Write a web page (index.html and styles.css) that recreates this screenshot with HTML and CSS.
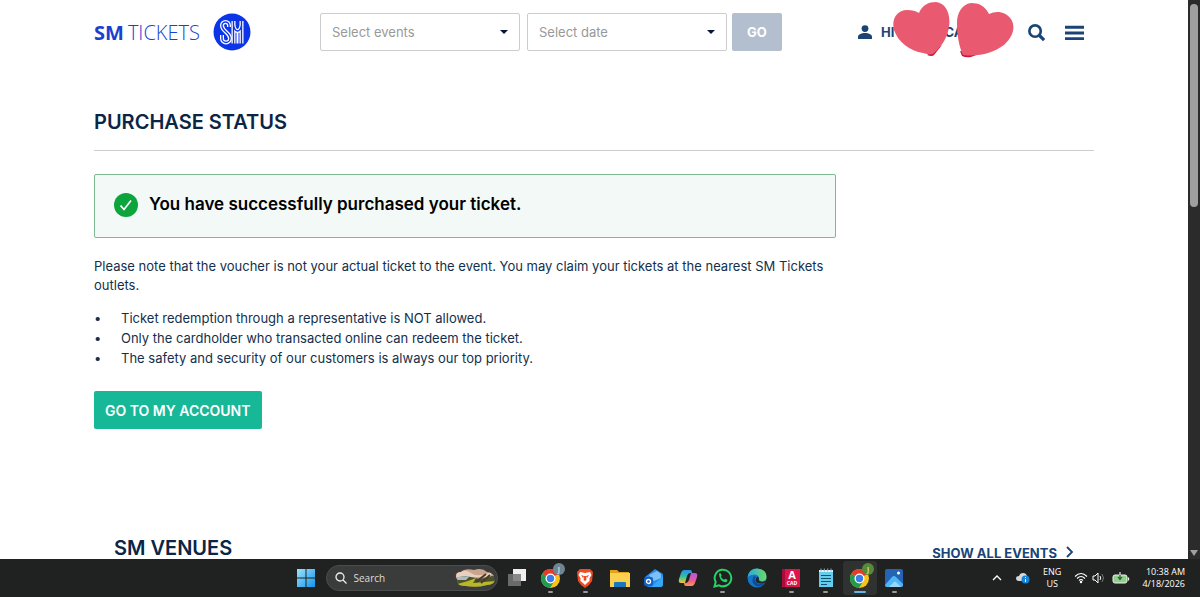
FILE: index.html
```html
<!DOCTYPE html>
<html lang="en">
<head>
  <meta charset="utf-8">
  <title>SM Tickets - Purchase Status</title>
  <link rel="stylesheet" href="styles.css">
</head>
<body>

<div class="browser">
  <div class="page">
    <header class="header container">
      <a class="logo" href="#">
        <span class="logo-sm">SM</span><span class="logo-tickets">TICKETS</span>
        <svg class="logo-mark" viewBox="0 0 38 38">
          <circle cx="19" cy="19" r="18.5" fill="#0c35e8"/>
          <g fill="none" stroke="#fff" stroke-width="4" stroke-linejoin="round">
            <path d="M16 14v-1.500a3.500 3.500 0 0 0-7 0c0 6 8 7 8 13a4 4 0 0 1-8 0V22"/>
            <path d="M20.500 30.500V8M28.500 8v22.500M20.500 12q1 6 4 6t4-6"/>
            <path d="M24.500 17v13.500" stroke-width="2"/>
          </g>
          <g fill="none" stroke="#0c35e8" stroke-width="1.400">
            <path d="M16 14v-1.500a3.500 3.500 0 0 0-7 0c0 6 8 7 8 13a4 4 0 0 1-8 0V22"/>
            <path d="M20.500 31V7M28.500 7v24M20.500 12q1 6 4 6t4-6"/>
          </g>
        </svg>
      </a>

      <form class="search-form">
        <div class="select-box">
          <select aria-label="Select events"><option>Select events</option></select>
        </div>
        <div class="select-box">
          <select aria-label="Select date"><option>Select date</option></select>
        </div>
        <button class="go-btn" type="button">GO</button>
      </form>

      <div class="header-right">
        <a class="user" href="#">
          <svg class="user-icon" viewBox="0 0 14 14"><circle cx="7" cy="3.600" r="3.400"/><path d="M0 14v-2c0-3 4-4 7-4s7 1 7 4v2z"/></svg>
          <span>HI</span><span class="user-name">CA</span>
          <svg class="hearts" viewBox="0 0 122 58">
            <path d="M50 44L42 54q-2 2-7 0z" fill="#c9163c"/>
            <path d="M68 50l2 5q4 2 9 1l8-3z" fill="#c9163c"/>
            <path d="M27 12C30 4 37 1 44 1c10 1 15 12 13 25C55 38 49 46 41 53c-3 1-6 0-10-1C18 50 6 41 2 29-1 17 6 9 15 9c5 0 9 1 12 3z" fill="#e95a70"/>
            <path d="M97 13C93 5 87 2 79 2c-9 1-14 10-14 20 0 12 2 24 6 32 16 2 30-2 41-10 9-8 12-18 7-26-5-7-14-9-22-5z" fill="#e95a70"/>
          </svg>
        </a>
        <button class="icon-btn" type="button" aria-label="Search">
          <svg viewBox="0 0 20 20" fill="none" stroke="#1a4475" stroke-width="2.800"><circle cx="8.500" cy="8.500" r="6"/><path d="M13 13l5 5" stroke-width="3.400"/></svg>
        </button>
        <button class="icon-btn" type="button" aria-label="Menu">
          <svg viewBox="0 0 20 20" fill="#1a4475"><path d="M0 3h20v3H0zM0 9h20v3H0zM0 15h20v3H0z"/></svg>
        </button>
      </div>
    </header>

    <main class="container">
      <h1 class="title">PURCHASE STATUS</h1>

      <div class="content">
        <div class="alert">
          <svg class="alert-icon" viewBox="0 0 24 24"><circle cx="12" cy="12" r="12" fill="#0ca43c"/><path d="M6.500 12.500l3.500 4 7-9" fill="none" stroke="#fff" stroke-width="1.700"/></svg>
          <strong>You have successfully purchased your ticket.</strong>
        </div>
        <p class="note">Please note that the voucher is not your actual ticket to the event. You may claim your tickets at the nearest SM Tickets outlets.</p>
        <ul class="rules">
          <li>Ticket redemption through a representative is NOT allowed.</li>
          <li>Only the cardholder who transacted online can redeem the ticket.</li>
          <li>The safety and security of our customers is always our top priority.</li>
        </ul>
        <button class="account-btn" type="button">GO TO MY ACCOUNT</button>
      </div>

      <section class="venues">
        <h2>SM VENUES</h2>
        <a class="show-all" href="#">SHOW ALL EVENTS
          <svg viewBox="0 0 8 12"><path d="M1 1l5 5-5 5" fill="none" stroke="#1a4475" stroke-width="1.800"/></svg>
        </a>
      </section>
    </main>
  </div>

  <div class="scrollbar">
    <div class="thumb"></div>
    <div class="arrow-down"></div>
  </div>
</div>

<!-- taskbar -->
<footer class="taskbar">
  <div class="task-center">
    <a class="app" href="#" aria-label="Start">
      <svg viewBox="0 0 20 20">
        <defs><linearGradient id="win" x2="1" y2="1"><stop stop-color="#9be4fb"/><stop offset="1" stop-color="#1593ea"/></linearGradient></defs>
        <path d="M1 1h8.500v8.500H1zM10.500 1H19v8.500h-8.500zM1 10.500h8.500V19H1zM10.500 10.500H19V19h-8.500z" fill="url(#win)"/>
      </svg>
    </a>
    <label class="task-search">
      <svg class="glass" viewBox="0 0 12 12" fill="none" stroke="#eee" stroke-width="1.300"><circle cx="5" cy="5" r="4"/><path d="M8 8l3.500 3.500"/></svg>
      <input type="text" placeholder="Search">
      <svg class="scene" viewBox="0 0 42 20">
        <defs><clipPath id="sc"><path d="M2 9Q1 4 7 4Q11 0 20 2Q28-1 33 4Q41 5 40 11Q42 16 33 17Q24 20 12 18Q2 18 4 13z"/></clipPath></defs>
        <g clip-path="url(#sc)">
          <path d="M0 0h42v20H0z" fill="#c9a58f"/>
          <path d="M3 5q8-5 14 0t20-1v5H2z" fill="#e8cfbe"/>
          <path d="M0 10l12-2 14 3 16-4v13H0z" fill="#4b5128"/>
          <path d="M2 9l14-1-4 4H2z" fill="#aebcc0"/>
          <path d="M0 17l14-4 8-3-3 5 22-2v7H0z" fill="#b8b728"/>
          <path d="M22 14L32 6M27 15l9-8" stroke="#4b3b2c" stroke-width="2"/>
        </g>
      </svg>
    </label>
    <nav class="apps">
      <a class="app" href="#" aria-label="Task view">
        <svg viewBox="0 0 20 20"><path d="M6 1h13v12H6z" fill="#f0f0f0"/><path d="M1 6h13v12H1z" fill="#777" opacity=".85"/></svg>
      </a>
      <a class="app open" href="#" aria-label="Chrome">
        <svg viewBox="0 0 20 20">
          <g id="chrome">
            <circle cx="9.500" cy="10.500" r="9.500" fill="#fbc116"/>
            <path d="M9.500 10.500L1.300 5.700A9.500 9.500 0 0 1 17.700 5.700z" fill="#e33b2e"/>
            <path d="M1.300 5.700A9.500 9.500 0 0 0 9 20l4.500-7.300-4-2.200z" fill="#229c4c"/>
            <circle cx="9.500" cy="10.500" r="5" fill="#fff"/>
            <circle cx="9.500" cy="10.500" r="3.700" fill="#3b7de9"/>
          </g>
        </svg>
        <span class="badge">J</span>
      </a>
      <a class="app open" href="#" aria-label="Brave">
        <svg viewBox="0 0 20 20"><path d="M5 1h10l3 3-1 9-3 4-4 3-4-3-3-4-1-9z" fill="#f04a23"/><path d="M5 4l5 1 5-1 1.500 3-2 3 0 3-2.500 2-2 2-2-2-2.500-2V10l-2-3z" fill="#fff"/><path d="M6 7l3 1-1 2zM14 7l-3 1 1 2zM9 8h2l.5 4-1.500 1-1.500-1z" fill="#f04a23"/></svg>
      </a>
      <a class="app" href="#" aria-label="File Explorer">
        <svg viewBox="0 0 20 20"><path d="M0 2h7l2 2h10v5H0z" fill="#e2a21b"/><path d="M0 5h20v14H0z" fill="#fcd04f"/><path d="M4 19v-4q0-1 1-1h10q1 0 1 1v4z" fill="#1978bd"/></svg>
      </a>
      <a class="app" href="#" aria-label="Outlook">
        <svg viewBox="0 0 20 20"><path d="M1 9l10-8 8 5v10q0 3-3 3H5q-3 0-4-3z" fill="#2789ea"/><path d="M5 7l8-4 4 3v4l-7 3z" fill="#7cc0fa"/><path d="M7 19l12-11v8q0 3-3 3z" fill="#36a7f7"/><rect y="9" width="9" height="9" rx="2" fill="#1262c6"/><circle cx="4.500" cy="13.500" r="2" fill="none" stroke="#fff" stroke-width="1.300"/></svg>
      </a>
      <a class="app" href="#" aria-label="Copilot">
        <svg viewBox="0 0 20 20">
          <defs>
            <linearGradient id="cpa" x2="0" y2="1"><stop stop-color="#2a8eea"/><stop offset=".5" stop-color="#35bfa0"/><stop offset="1" stop-color="#f4c832"/></linearGradient>
            <linearGradient id="cpb" x2="0" y2="1"><stop stop-color="#a85be8"/><stop offset=".6" stop-color="#ee5a90"/><stop offset="1" stop-color="#fb9a4a"/></linearGradient>
          </defs>
          <path d="M6 2h6q2 0 2 3l-2 0q-2 0-3 3l-2 7H3q-3 0-2-4l2-6q1-3 3-3z" fill="url(#cpa)"/>
          <path d="M14 18H8q-2 0-2-3h2q2 0 3-3l2-7h4q3 0 2 4l-2 6q-1 3-3 3z" fill="url(#cpb)"/>
        </svg>
      </a>
      <a class="app open" href="#" aria-label="WhatsApp">
        <svg viewBox="0 0 20 20"><path d="M1.500 18.500l1.200-4.500a8.300 8.300 0 1 1 3.300 3.300z" fill="none" stroke="#25d366" stroke-width="2"/><path d="M6 6q1-2 2 0l.7 1.600-.8 1.200q1 2 3.200 3l1.200-1 2 1q.6 2-2 2.500Q6.500 13.500 6 6z" fill="#25d366"/></svg>
      </a>
      <a class="app" href="#" aria-label="Edge">
        <svg viewBox="0 0 20 20">
          <defs><linearGradient id="ed"><stop stop-color="#28a7e8"/><stop offset="1" stop-color="#6cdb62"/></linearGradient></defs>
          <circle cx="10" cy="10" r="9.500" fill="#1576c8"/>
          <path d="M.5 9Q2 .5 10 .5q9 .5 9.500 8 0 5-5.500 5-3 0-2-2.500Q12 6.500 7.500 6.500T.5 9z" fill="url(#ed)"/>
          <path d="M7 8q-4 6 2 10 5 2 9-3-8 3-10-2-1-2 1-4z" fill="#0c4c96"/>
          <path d="M10 8.500q2.500.5 1.800 3.500 2 3 7.700.5L18 15q-9 2-9.500-3z" fill="#20282c"/>
        </svg>
      </a>
      <a class="app open" href="#" aria-label="AutoCAD">
        <svg viewBox="0 0 20 20"><path d="M1 1h18v18H1z" fill="#e0144c"/><path d="M1 1h3v18l-3-1z" fill="#a80c38"/><text x="11" y="11" class="cad-a">A</text><text x="11" y="17" class="cad-b">CAD</text></svg>
      </a>
      <a class="app open" href="#" aria-label="Notepad">
        <svg viewBox="0 0 20 20"><path d="M3 2h14v17H3z" fill="#63cdee"/><path d="M3 2h14v2H3z" fill="#e8f4f8"/><path d="M5 .5v3M8.300 .5v3M11.700 .5v3M15 .5v3" stroke="#9ab"/><path d="M5 7.500h10M5 10.500h10M5 13.500h10M5 16.500h6" stroke="#14506e" stroke-width="1.200"/></svg>
      </a>
      <a class="app open active" href="#" aria-label="Chrome">
        <svg viewBox="0 0 20 20"><use href="#chrome"/></svg>
        <span class="badge green">J</span>
      </a>
      <a class="app open" href="#" aria-label="Photos">
        <svg viewBox="0 0 20 20"><rect x="1" y="1" width="18" height="18" rx="2" fill="#2563b5"/><path d="M1 17l7-8q2-2 4 0l7 7v1q0 2-2 2H3q-2 0-2-2z" fill="#4db8f4"/><path d="M5 19l5-5q1-1 2 0l5 5z" fill="#9bd6fb"/><circle cx="14.500" cy="5" r="1.500" fill="#fff"/></svg>
      </a>
    </nav>
  </div>

  <div class="tray">
    <svg class="chevron" viewBox="0 0 10 6"><path d="M1 5l4-4 4 4" fill="none" stroke="#fff" stroke-width="1.300"/></svg>
    <svg class="cloud" viewBox="0 0 14 12"><path d="M3 9Q0 9 0 6.500T3 4Q4 1 7 1t4 3q2 1 1 5z" fill="#d5d9dc"/><circle cx="9.500" cy="7.500" r="4" fill="#1485dc"/><path d="M9.500 5v1M9.500 7v3" stroke="#fff"/></svg>
    <div class="lang">ENG<br>US</div>
    <svg class="wifi" viewBox="0 0 14 12" fill="none" stroke="#fff" stroke-width="1.100"><path d="M1 4.500q6-6 12 0M3 6.500q4-4 8 0M5 8.500q2-2 4 0"/><circle cx="7" cy="10" r=".7" fill="#fff"/></svg>
    <svg class="sound" viewBox="0 0 12 12" fill="none" stroke="#fff"><path d="M1 4h2l3-3v10L3 8H1z"/><path d="M8 4q1.500 2 0 4"/><path d="M10 2q3 4 0 8" stroke="#777"/></svg>
    <svg class="battery" viewBox="0 0 18 12"><rect x="1" y="3" width="14" height="8" rx="2" fill="#92cf8f" stroke="#e8f5e8"/><path d="M16.500 5.500v3" stroke="#e8f5e8" stroke-width="1.300"/><path d="M8 0v7M6 5l2 2.500L10 5" fill="none" stroke="#2c5a2c" stroke-width="1.200"/><path d="M8 0v3" stroke="#fff"/></svg>
    <div class="clock">10:38 AM<br>4/18/2026</div>
  </div>
</footer>

</body>
</html>
```
FILE: styles.css
```css
* {
  box-sizing: border-box;
}

body {
  margin: 0;
  height: 100vh;
  display: flex;
  flex-direction: column;
  overflow: hidden;
  font-family: Inter, "Open Sans", sans-serif;
  font-size: 13px;
  color: #12304d;
  background: #fff;
}

a {
  color: inherit;
  text-decoration: none;
}

button, select, input {
  font-family: inherit;
}

.browser {
  flex: 1;
  min-height: 0;
  display: flex;
}

.page {
  flex: 1;
  overflow: hidden;
}

.container {
  max-width: 1000px;
  margin: 0 auto;
}

/* header */
.header {
  display: flex;
  align-items: center;
  height: 64px;
  padding-right: 10px;
}

.logo {
  display: flex;
  align-items: center;
  width: 226px;
  font-family: "Open Sans", sans-serif;
  font-size: 20px;
  color: #1c3fd0;
}

.logo-sm {
  font-weight: 700;
  margin-right: 4px;
}

.logo-tickets {
  font-weight: 300;
}

.logo-mark {
  width: 38px;
  height: 38px;
  margin-left: 13px;
}

.search-form {
  display: flex;
}

.select-box {
  position: relative;
  width: 200px;
  margin-right: 7px;
}

.select-box + .select-box {
  margin-right: 5px;
}

.select-box::after {
  content: "";
  position: absolute;
  right: 12px;
  top: 17px;
  border: 4px solid transparent;
  border-top-color: #06183a;
  border-bottom: 0;
}

.select-box select {
  appearance: none;
  width: 100%;
  height: 38px;
  padding: 0 11px;
  border: 1px solid #ccc;
  border-radius: 2px;
  background: #fff;
  color: #999;
  font-size: 13px;
}

.go-btn {
  width: 50px;
  height: 38px;
  border: 0;
  border-radius: 2px;
  background: #b3bfce;
  color: #fff;
  font-size: 13px;
  font-weight: 700;
}

.header-right {
  display: flex;
  align-items: center;
  gap: 19px;
  margin-left: auto;
}

.user {
  position: relative;
  display: flex;
  align-items: center;
  width: 150px;
  color: #1a4475;
  font-weight: 700;
}

.user-icon {
  width: 14px;
  height: 14px;
  margin-right: 9px;
  fill: #1a4475;
}

.user-name {
  margin-left: 50px;
}

.hearts {
  position: absolute;
  left: 34px;
  top: -23px;
  width: 122px;
  height: 58px;
}

.icon-btn {
  width: 19px;
  height: 19px;
  padding: 0;
  border: 0;
  background: none;
}

.icon-btn svg {
  display: block;
  width: 100%;
}

/* purchase status */
.title {
  margin: 45px 0 23px;
  padding-bottom: 15px;
  border-bottom: 1px solid #ccc;
  color: #0b2545;
  font-size: 20px;
  line-height: 26px;
  font-weight: 600;
}

.content {
  width: 742px;
}

.alert {
  display: flex;
  height: 64px;
  padding: 18px 19px;
  border: 1px solid #7fb893;
  border-radius: 2px;
  background: #f3f9f6;
  color: #000;
  font-size: 17px;
  line-height: 22px;
}

.alert strong {
  font-weight: 600;
}

.alert-icon {
  width: 24px;
  height: 24px;
  margin-right: 11px;
}

.note {
  margin: 19px 0 13px;
  line-height: 19px;
}

.rules {
  margin: 0 0 23px;
  padding-left: 27px;
  list-style: none;
  line-height: 20px;
}

.rules li::before {
  content: "•";
  float: left;
  margin-left: -27px;
}

.account-btn {
  display: block;
  height: 38px;
  padding: 0 11px;
  border: 0;
  border-radius: 2px;
  background: #16b897;
  color: #fff;
  font-size: 14px;
  font-weight: 600;
}

.venues {
  display: flex;
  justify-content: space-between;
  align-items: flex-end;
  margin-top: 106px;
  padding: 0 20px;
}

.venues h2 {
  margin: 0;
  color: #0b2545;
  font-size: 20px;
  line-height: 26px;
  font-weight: 600;
}

.show-all {
  color: #1a4475;
  line-height: 15px;
  font-weight: 700;
}

.show-all svg {
  width: 8px;
  height: 12px;
  margin-left: 6px;
}

/* browser scrollbar */
.scrollbar {
  position: relative;
  width: 12px;
  padding: 4px 2px;
  background: #2b2b2b;
}

.thumb {
  height: 203px;
  border-radius: 4px;
  background: #9f9f9f;
}

.arrow-down {
  position: absolute;
  left: 2px;
  bottom: 3px;
  border: 4px solid transparent;
  border-top: 6px solid #9f9f9f;
  border-bottom: 0;
}

/* taskbar */
.taskbar {
  display: grid;
  grid-template-columns: 1fr auto 1fr;
  align-items: center;
  height: 38px;
  background: #202221;
  color: #fff;
  font-family: "Open Sans", sans-serif;
  font-size: 9px;
  line-height: 12px;
}

.task-center {
  grid-column: 2;
  display: flex;
  align-items: center;
}

.app {
  position: relative;
  display: flex;
  align-items: center;
  justify-content: center;
  width: 34px;
  height: 34px;
}

.app > svg {
  width: 20px;
  height: 20px;
}

.apps {
  display: flex;
  justify-content: space-between;
  width: 412px;
}

.app.open::after {
  content: "";
  position: absolute;
  bottom: 2px;
  width: 5px;
  height: 2px;
  border-radius: 1px;
  background: #999;
}

.app.active {
  border-radius: 3px;
  background: #303231;
}

.app.active::after {
  width: 12px;
  background: #64b5e8;
}

.badge {
  position: absolute;
  right: 3px;
  top: 2px;
  width: 12px;
  height: 12px;
  border-radius: 50%;
  background: #6f8594;
  font-size: 8px;
  text-align: center;
}

.badge.green {
  background: #538b38;
}

.cad-a, .cad-b {
  fill: #fff;
  font-weight: 700;
  font-size: 11px;
  text-anchor: middle;
}

.cad-b {
  font-size: 5px;
}

.task-search {
  display: flex;
  align-items: center;
  width: 172px;
  height: 26px;
  margin: 0 2px 0 3px;
  padding: 0 1px 0 8px;
  border: 1px solid #4b4d4c;
  border-radius: 13px;
  background: #3a3c3b;
}

.task-search input {
  flex: 1;
  min-width: 0;
  padding: 0 7px;
  border: 0;
  background: none;
  font-size: 10px;
}

.task-search input::placeholder {
  color: #ddd;
}

.glass {
  width: 12px;
  height: 12px;
}

.scene {
  width: 42px;
  height: 20px;
}

.tray {
  display: flex;
  align-items: center;
  justify-content: flex-end;
  padding-right: 15px;
}

.chevron {
  width: 10px;
  height: 6px;
}

.cloud {
  width: 14px;
  height: 12px;
  margin: 0 13px 0 14px;
}

.lang {
  text-align: center;
}

.wifi {
  width: 14px;
  height: 12px;
  margin-left: 13px;
}

.sound {
  width: 12px;
  height: 12px;
  margin: 0 8px 0 4px;
}

.battery {
  width: 18px;
  height: 12px;
}

.clock {
  margin-left: 12px;
  text-align: right;
}
```
